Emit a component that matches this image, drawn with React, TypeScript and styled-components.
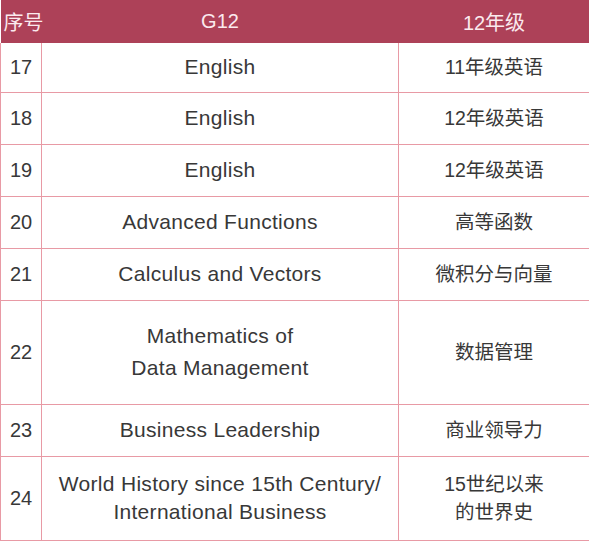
import React from "react";
import styled, { createGlobalStyle } from "styled-components";

const GlobalStyle = createGlobalStyle`
  html, body {
    margin: 0;
    padding: 0;
    background: #ffffff;
  }
  body {
    font-family: "Liberation Sans", "Noto Sans CJK SC", Arial, sans-serif;
    color: #333333;
  }
`;

type Row = {
  no: number;
  en: string[];
  zh: string[];
  height: number;
  lineHeight?: number;
};

const rows: Row[] = [
  { no: 17, en: ["English"], zh: ["11年级英语"], height: 49 },
  { no: 18, en: ["English"], zh: ["12年级英语"], height: 52 },
  { no: 19, en: ["English"], zh: ["12年级英语"], height: 52 },
  { no: 20, en: ["Advanced Functions"], zh: ["高等函数"], height: 52 },
  { no: 21, en: ["Calculus and Vectors"], zh: ["微积分与向量"], height: 52 },
  {
    no: 22,
    en: ["Mathematics of", "Data Management"],
    zh: ["数据管理"],
    height: 104,
    lineHeight: 32,
  },
  { no: 23, en: ["Business Leadership"], zh: ["商业领导力"], height: 52 },
  {
    no: 24,
    en: ["World History since 15th Century/", "International Business"],
    zh: ["15世纪以来", "的世界史"],
    height: 84,
    lineHeight: 28,
  },
];

const Table = styled.table`
  width: 589px;
  border-collapse: collapse;
  table-layout: fixed;
`;

const HeadRow = styled.tr`
  height: 43px;
  background: #ad4158;
`;

const HeadCell = styled.th<{ $align?: string }>`
  padding: 0;
  font-weight: normal;
  font-size: 20px;
  color: #fbeaee;
  text-align: ${(p) => p.$align || "center"};
  padding-left: ${(p) => (p.$align === "left" ? "3px" : "0")};
  white-space: nowrap;
  vertical-align: middle;
`;

const BodyRow = styled.tr<{ $h: number }>`
  height: ${(p) => p.$h}px;
`;

const Cell = styled.td<{ $lh: number; $en?: boolean }>`
  border: 1px solid #e89aa5;
  border-top: none;
  padding: 0;
  text-align: center;
  vertical-align: middle;
  font-size: ${(p) => (p.$en ? "21px" : "19.5px")};
  letter-spacing: ${(p) => (p.$en ? "0.3px" : "0")};
  line-height: ${(p) => p.$lh}px;
  color: #383838;
`;

const NumCell = styled(Cell)`
  font-size: 20px;
  letter-spacing: 0;
`;

const Line = styled.div`
  white-space: nowrap;
`;

export default function App() {
  return (
    <>
      <GlobalStyle />
      <Table>
        <colgroup>
          <col style={{ width: 41 }} />
          <col style={{ width: 357 }} />
          <col style={{ width: 191 }} />
        </colgroup>
        <thead>
          <HeadRow>
            <HeadCell $align="left">序号</HeadCell>
            <HeadCell>G12</HeadCell>
            <HeadCell>12年级</HeadCell>
          </HeadRow>
        </thead>
        <tbody>
          {rows.map((r) => {
            const lh = r.lineHeight ?? 28;
            return (
              <BodyRow key={r.no} $h={r.height}>
                <NumCell $lh={lh}>{r.no}</NumCell>
                <Cell $lh={lh} $en>
                  {r.en.map((t) => (
                    <Line key={t}>{t}</Line>
                  ))}
                </Cell>
                <Cell $lh={lh}>
                  {r.zh.map((t) => (
                    <Line key={t}>{t}</Line>
                  ))}
                </Cell>
              </BodyRow>
            );
          })}
        </tbody>
      </Table>
    </>
  );
}
